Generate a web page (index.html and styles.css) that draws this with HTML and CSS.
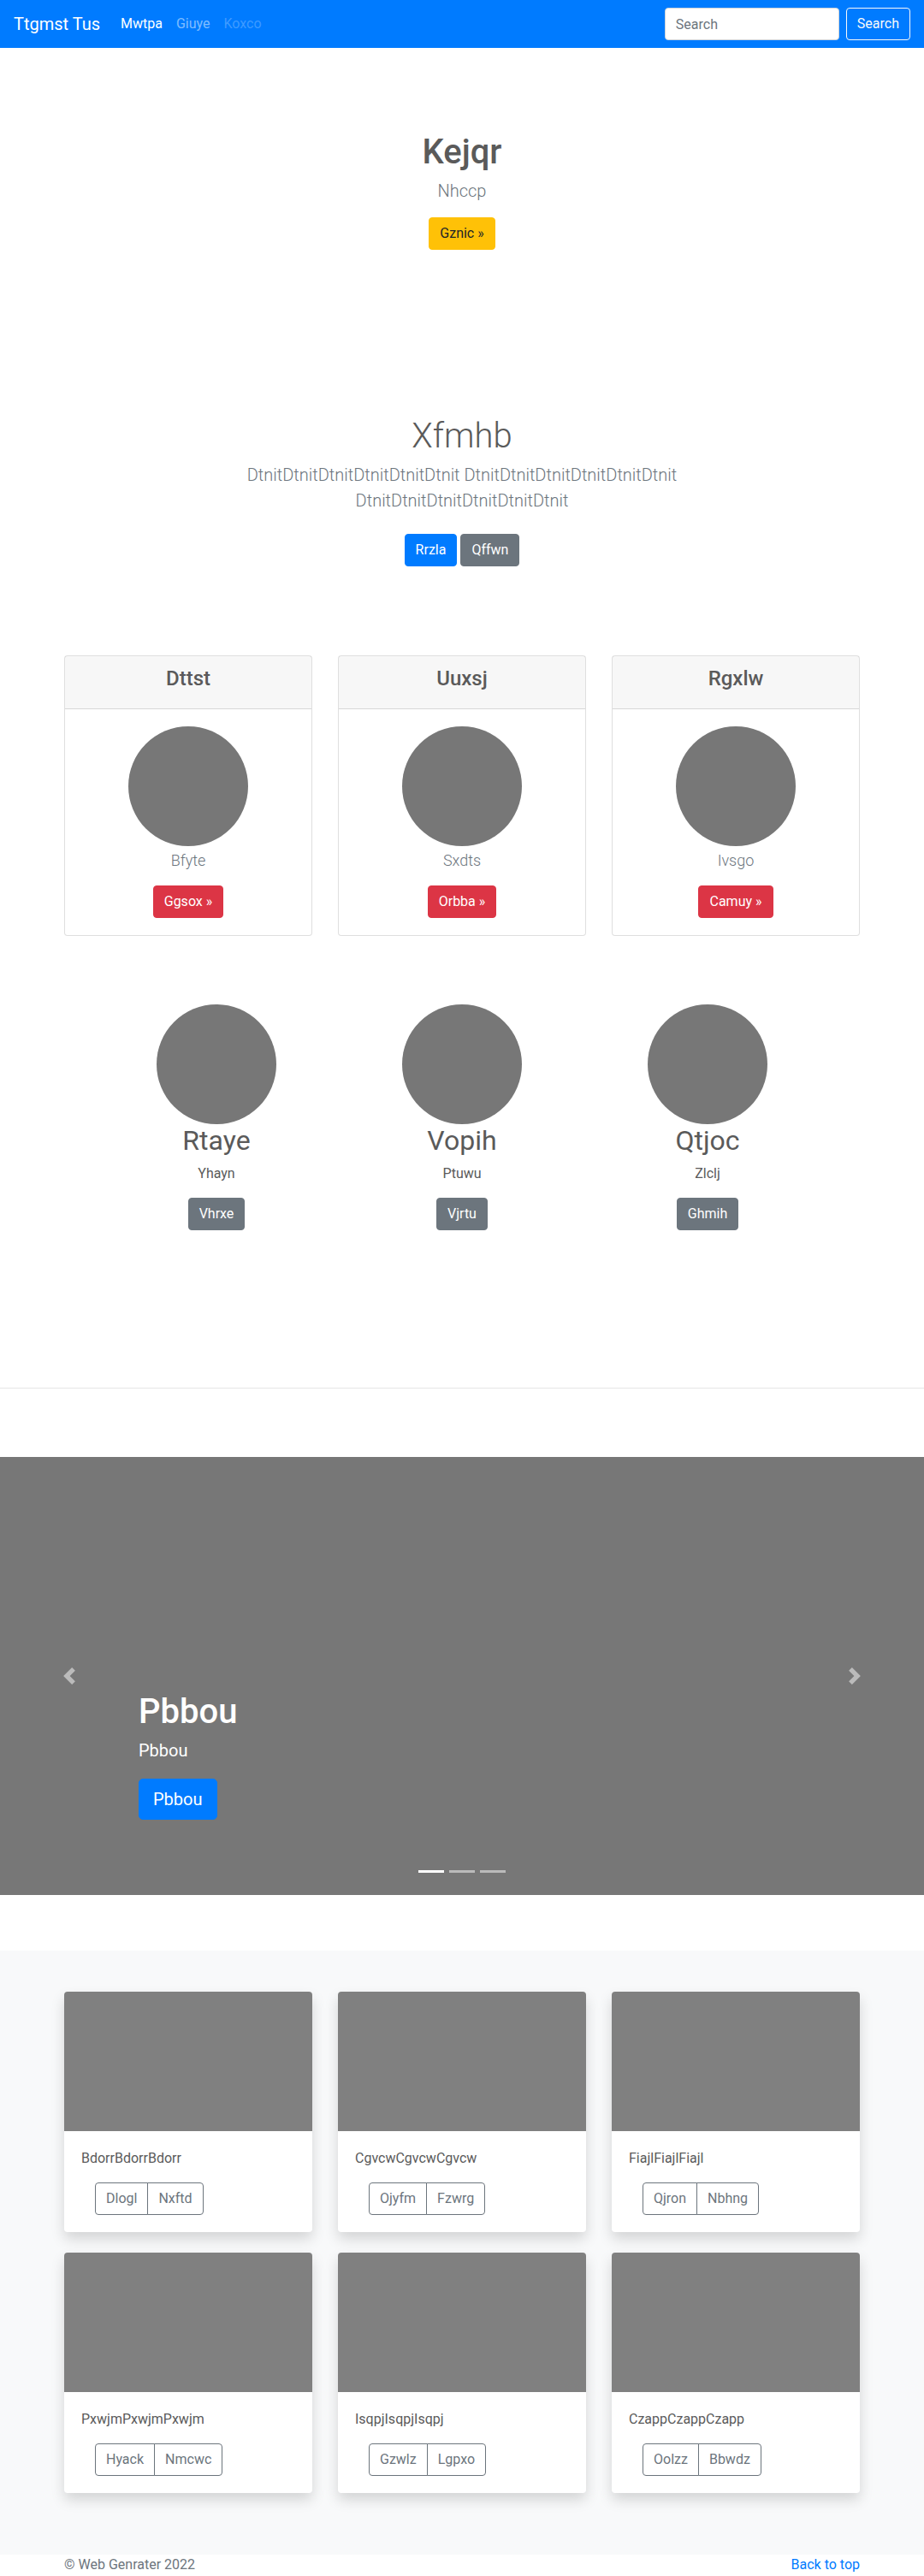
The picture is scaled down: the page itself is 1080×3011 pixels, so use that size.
FILE: index.html
```html
<!DOCTYPE html>
<html lang="en">
<head>
<meta charset="utf-8">
<title>Ttgmst Tus</title>
<link rel="stylesheet" href="styles.css">
</head>
<body>
<nav class="navbar">
  <div class="nav-left">
    <a class="brand" href="#">Ttgmst Tus</a>
    <a class="nav-link active" href="#">Mwtpa</a>
    <a class="nav-link" href="#">Giuye</a>
    <a class="nav-link disabled" href="#">Koxco</a>
  </div>
  <form class="search">
    <input class="search-input" type="text" placeholder="Search">
    <button class="btn btn-outline-light" type="button">Search</button>
  </form>
</nav>

<section class="hero">
  <h1 class="hero-title">Kejqr</h1>
  <p class="lead">Nhccp</p>
  <a class="btn btn-warning" href="#">Gznic &raquo;</a>
</section>

<section class="jumbo">
  <div class="jumbo-inner">
    <h1 class="jumbo-title">Xfmhb</h1>
    <p class="lead">DtnitDtnitDtnitDtnitDtnitDtnit DtnitDtnitDtnitDtnitDtnitDtnit DtnitDtnitDtnitDtnitDtnitDtnit</p>
    <p class="actions">
      <a class="btn btn-primary" href="#">Rrzla</a>
      <a class="btn btn-secondary" href="#">Qffwn</a>
    </p>
  </div>
</section>

<section class="container pricing">
  <div class="card">
    <div class="card-header"><h4>Dttst</h4></div>
    <div class="card-body">
      <svg class="circle" width="140" height="140"><circle cx="70" cy="70" r="70" fill="#777"/></svg>
      <p class="card-sub">Bfyte</p>
      <a class="btn btn-danger" href="#">Ggsox &raquo;</a>
    </div>
  </div>
  <div class="card">
    <div class="card-header"><h4>Uuxsj</h4></div>
    <div class="card-body">
      <svg class="circle" width="140" height="140"><circle cx="70" cy="70" r="70" fill="#777"/></svg>
      <p class="card-sub">Sxdts</p>
      <a class="btn btn-danger" href="#">Orbba &raquo;</a>
    </div>
  </div>
  <div class="card">
    <div class="card-header"><h4>Rgxlw</h4></div>
    <div class="card-body">
      <svg class="circle" width="140" height="140"><circle cx="70" cy="70" r="70" fill="#777"/></svg>
      <p class="card-sub">Ivsgo</p>
      <a class="btn btn-danger" href="#">Camuy &raquo;</a>
    </div>
  </div>
</section>

<section class="marketing">
  <div class="mk-col">
    <svg class="circle" width="140" height="140"><circle cx="70" cy="70" r="70" fill="#777"/></svg>
    <h2>Rtaye</h2>
    <p>Yhayn</p>
    <a class="btn btn-secondary" href="#">Vhrxe</a>
  </div>
  <div class="mk-col">
    <svg class="circle" width="140" height="140"><circle cx="70" cy="70" r="70" fill="#777"/></svg>
    <h2>Vopih</h2>
    <p>Ptuwu</p>
    <a class="btn btn-secondary" href="#">Vjrtu</a>
  </div>
  <div class="mk-col">
    <svg class="circle" width="140" height="140"><circle cx="70" cy="70" r="70" fill="#777"/></svg>
    <h2>Qtjoc</h2>
    <p>Zlclj</p>
    <a class="btn btn-secondary" href="#">Ghmih</a>
  </div>
</section>

<hr class="divider">

<section class="carousel">
  <div class="slide">
    <h1 class="slide-title">Pbbou</h1>
    <p class="slide-text">Pbbou</p>
    <a class="btn btn-primary btn-lg" href="#">Pbbou</a>
  </div>
  <a class="ctrl ctrl-prev" href="#" aria-label="Previous">
    <svg width="20" height="20" viewBox="0 0 8 8"><path fill="#fff" d="M5.25 0l-4 4 4 4 1.5-1.5L4.25 4l2.5-2.5L5.25 0z"/></svg>
  </a>
  <a class="ctrl ctrl-next" href="#" aria-label="Next">
    <svg width="20" height="20" viewBox="0 0 8 8"><path fill="#fff" d="M2.75 0l-1.5 1.5L3.75 4l-2.5 2.5L2.75 8l4-4-4-4z"/></svg>
  </a>
  <ol class="indicators">
    <li class="active"></li>
    <li></li>
    <li></li>
  </ol>
</section>

<section class="album">
  <div class="container album-grid">
    <div class="acard">
      <div class="acard-img"></div>
      <div class="acard-body">
        <p>BdorrBdorrBdorr</p>
        <div class="btn-group"><button class="btn btn-outline-secondary">Dlogl</button><button class="btn btn-outline-secondary">Nxftd</button></div>
      </div>
    </div>
    <div class="acard">
      <div class="acard-img"></div>
      <div class="acard-body">
        <p>CgvcwCgvcwCgvcw</p>
        <div class="btn-group"><button class="btn btn-outline-secondary">Ojyfm</button><button class="btn btn-outline-secondary">Fzwrg</button></div>
      </div>
    </div>
    <div class="acard">
      <div class="acard-img"></div>
      <div class="acard-body">
        <p>FiajlFiajlFiajl</p>
        <div class="btn-group"><button class="btn btn-outline-secondary">Qjron</button><button class="btn btn-outline-secondary">Nbhng</button></div>
      </div>
    </div>
    <div class="acard">
      <div class="acard-img"></div>
      <div class="acard-body">
        <p>PxwjmPxwjmPxwjm</p>
        <div class="btn-group"><button class="btn btn-outline-secondary">Hyack</button><button class="btn btn-outline-secondary">Nmcwc</button></div>
      </div>
    </div>
    <div class="acard">
      <div class="acard-img"></div>
      <div class="acard-body">
        <p>IsqpjIsqpjIsqpj</p>
        <div class="btn-group"><button class="btn btn-outline-secondary">Gzwlz</button><button class="btn btn-outline-secondary">Lgpxo</button></div>
      </div>
    </div>
    <div class="acard">
      <div class="acard-img"></div>
      <div class="acard-body">
        <p>CzappCzappCzapp</p>
        <div class="btn-group"><button class="btn btn-outline-secondary">Oolzz</button><button class="btn btn-outline-secondary">Bbwdz</button></div>
      </div>
    </div>
  </div>
</section>

<footer class="container footer">
  <p class="copy">&copy; Web Genrater 2022</p>
  <a class="top-link" href="#">Back to top</a>
</footer>
</body>
</html>
```

FILE: styles.css
```css
* { box-sizing: border-box; }

body {
  margin: 0;
  font-family: Roboto, "Segoe UI", "Liberation Sans", sans-serif;
  font-size: 16px;
  line-height: 1.5;
  color: #5a5a5a;
  background: #fff;
}

h1, h2, h4, p { margin: 0; }

.container {
  width: 960px;
  margin: 0 auto;
  padding: 0 15px;
}

/* buttons */
.btn {
  display: inline-block;
  font-family: inherit;
  font-size: 16px;
  font-weight: 400;
  line-height: 24px;
  padding: 6px 12px;
  border: 1px solid transparent;
  border-radius: 4px;
  text-decoration: none;
  text-align: center;
  cursor: pointer;
  background: transparent;
}
.btn-primary { background: #007bff; border-color: #007bff; color: #fff; }
.btn-secondary { background: #6c757d; border-color: #6c757d; color: #fff; }
.btn-warning { background: #ffc107; border-color: #ffc107; color: #212529; }
.btn-danger { background: #dc3545; border-color: #dc3545; color: #fff; }
.btn-outline-light { border-color: #f8f9fa; color: #f8f9fa; }
.btn-outline-secondary { border-color: #6c757d; color: #6c757d; background: #fff; }
.btn-lg { font-size: 20px; line-height: 30px; padding: 8px 16px; border-radius: 5px; }

/* navbar */
.navbar {
  display: flex;
  align-items: center;
  justify-content: space-between;
  height: 56px;
  padding: 8px 16px;
  background: #007bff;
}
.nav-left { display: flex; align-items: center; }
.brand {
  font-size: 20px;
  line-height: 30px;
  color: #fff;
  margin-right: 16px;
  text-decoration: none;
}
.nav-link {
  padding: 8px;
  line-height: 24px;
  color: rgba(255, 255, 255, 0.5);
  text-decoration: none;
}
.nav-link.active { color: #fff; }
.nav-link.disabled { color: rgba(255, 255, 255, 0.25); }
.search { display: flex; margin: 0; }
.search-input {
  width: 204px;
  height: 38px;
  padding: 6px 12px;
  font-family: inherit;
  font-size: 16px;
  color: #495057;
  border: 1px solid #ced4da;
  border-radius: 4px;
  margin-right: 8px;
  background: #fff;
}
.search-input::placeholder { color: #6c757d; }

/* hero */
.hero {
  text-align: center;
  padding: 98px 0 146px;
}
.hero-title {
  font-size: 40px;
  line-height: 48px;
  font-weight: 500;
  margin-bottom: 6px;
}
.lead {
  font-size: 20px;
  line-height: 30px;
  font-weight: 300;
  color: #6c757d;
  margin-bottom: 16px;
}

/* jumbotron */
.jumbo { padding: 48px 0; text-align: center; }
.jumbo-inner { max-width: 640px; margin: 0 auto; padding: 0 15px; }
.jumbo-title {
  font-size: 40px;
  line-height: 48px;
  font-weight: 300;
  margin-bottom: 6px;
}
.actions {
  display: flex;
  justify-content: center;
  gap: 4px;
  padding: 8px 0;
}

/* pricing cards */
.pricing {
  display: grid;
  grid-template-columns: repeat(3, 1fr);
  column-gap: 30px;
  margin-top: 48px;
}
.card {
  border: 1px solid rgba(0, 0, 0, 0.125);
  border-radius: 4px;
  text-align: center;
  background: #fff;
}
.card-header {
  padding: 12px 20px;
  background: rgba(0, 0, 0, 0.03);
  border-bottom: 1px solid rgba(0, 0, 0, 0.125);
}
.card-header h4 {
  font-size: 24px;
  line-height: 28.8px;
  font-weight: 500;
  margin-bottom: 8px;
}
.card-body {
  padding: 20px;
  display: flex;
  flex-direction: column;
  align-items: center;
}
.circle { display: block; }
.card-sub {
  font-size: 18px;
  line-height: 27px;
  font-weight: 300;
  color: #6c757d;
  margin: 3px 0 16px;
}

/* marketing */
.marketing {
  width: 861px;
  margin: 80px auto 0;
  padding-bottom: 184px;
  display: grid;
  grid-template-columns: repeat(3, 1fr);
}
.mk-col {
  display: flex;
  flex-direction: column;
  align-items: center;
  text-align: center;
}
.mk-col h2 {
  font-size: 32px;
  line-height: 38.4px;
  font-weight: 400;
  margin-bottom: 8px;
}
.mk-col p { margin-bottom: 16px; }

.divider {
  height: 0;
  border: 0;
  border-top: 1px solid rgba(0, 0, 0, 0.1);
  margin: 0 0 80px;
}

/* carousel */
.carousel {
  position: relative;
  height: 512px;
  background: #777;
  margin-bottom: 65px;
}
.slide {
  height: 100%;
  display: flex;
  flex-direction: column;
  justify-content: flex-end;
  align-items: flex-start;
  padding: 0 15% 88px;
  color: #fff;
}
.slide-title {
  font-size: 40px;
  line-height: 48px;
  font-weight: 500;
  margin-bottom: 6px;
}
.slide-text {
  font-size: 20px;
  line-height: 30px;
  margin-bottom: 18px;
}
.ctrl {
  position: absolute;
  top: 0;
  bottom: 0;
  width: 15%;
  display: flex;
  align-items: center;
  justify-content: center;
  opacity: 0.5;
}
.ctrl svg { display: block; }
.ctrl-prev { left: 0; }
.ctrl-next { right: 0; }
.indicators {
  position: absolute;
  left: 15%;
  right: 15%;
  bottom: 0;
  display: flex;
  justify-content: center;
  list-style: none;
  padding: 0;
  margin: 0 0 16px;
}
.indicators li {
  width: 30px;
  height: 23px;
  margin: 0 3px;
  border-top: 10px solid transparent;
  border-bottom: 10px solid transparent;
  background: #fff;
  background-clip: padding-box;
  opacity: 0.5;
}
.indicators li.active { opacity: 1; }

/* album */
.album {
  background: #f8f9fa;
  padding: 48px 0 72px;
}
.album-grid {
  display: grid;
  grid-template-columns: repeat(3, 1fr);
  column-gap: 30px;
  row-gap: 24px;
}
.acard {
  background: #fff;
  border-radius: 4px;
  overflow: hidden;
  box-shadow: 0 8px 16px rgba(0, 0, 0, 0.15);
}
.acard-img {
  height: 163px;
  background: #808080;
}
.acard-body { padding: 20px; }
.acard-body p { margin-bottom: 16px; }
.btn-group { display: flex; margin-left: 16px; }
.btn-group .btn:first-child { border-top-right-radius: 0; border-bottom-right-radius: 0; }
.btn-group .btn + .btn { margin-left: -1px; border-top-left-radius: 0; border-bottom-left-radius: 0; }

/* footer */
.footer {
  display: flex;
  justify-content: space-between;
  line-height: 24px;
}
.copy { color: #6c757d; }
.top-link { color: #007bff; text-decoration: none; }
```
